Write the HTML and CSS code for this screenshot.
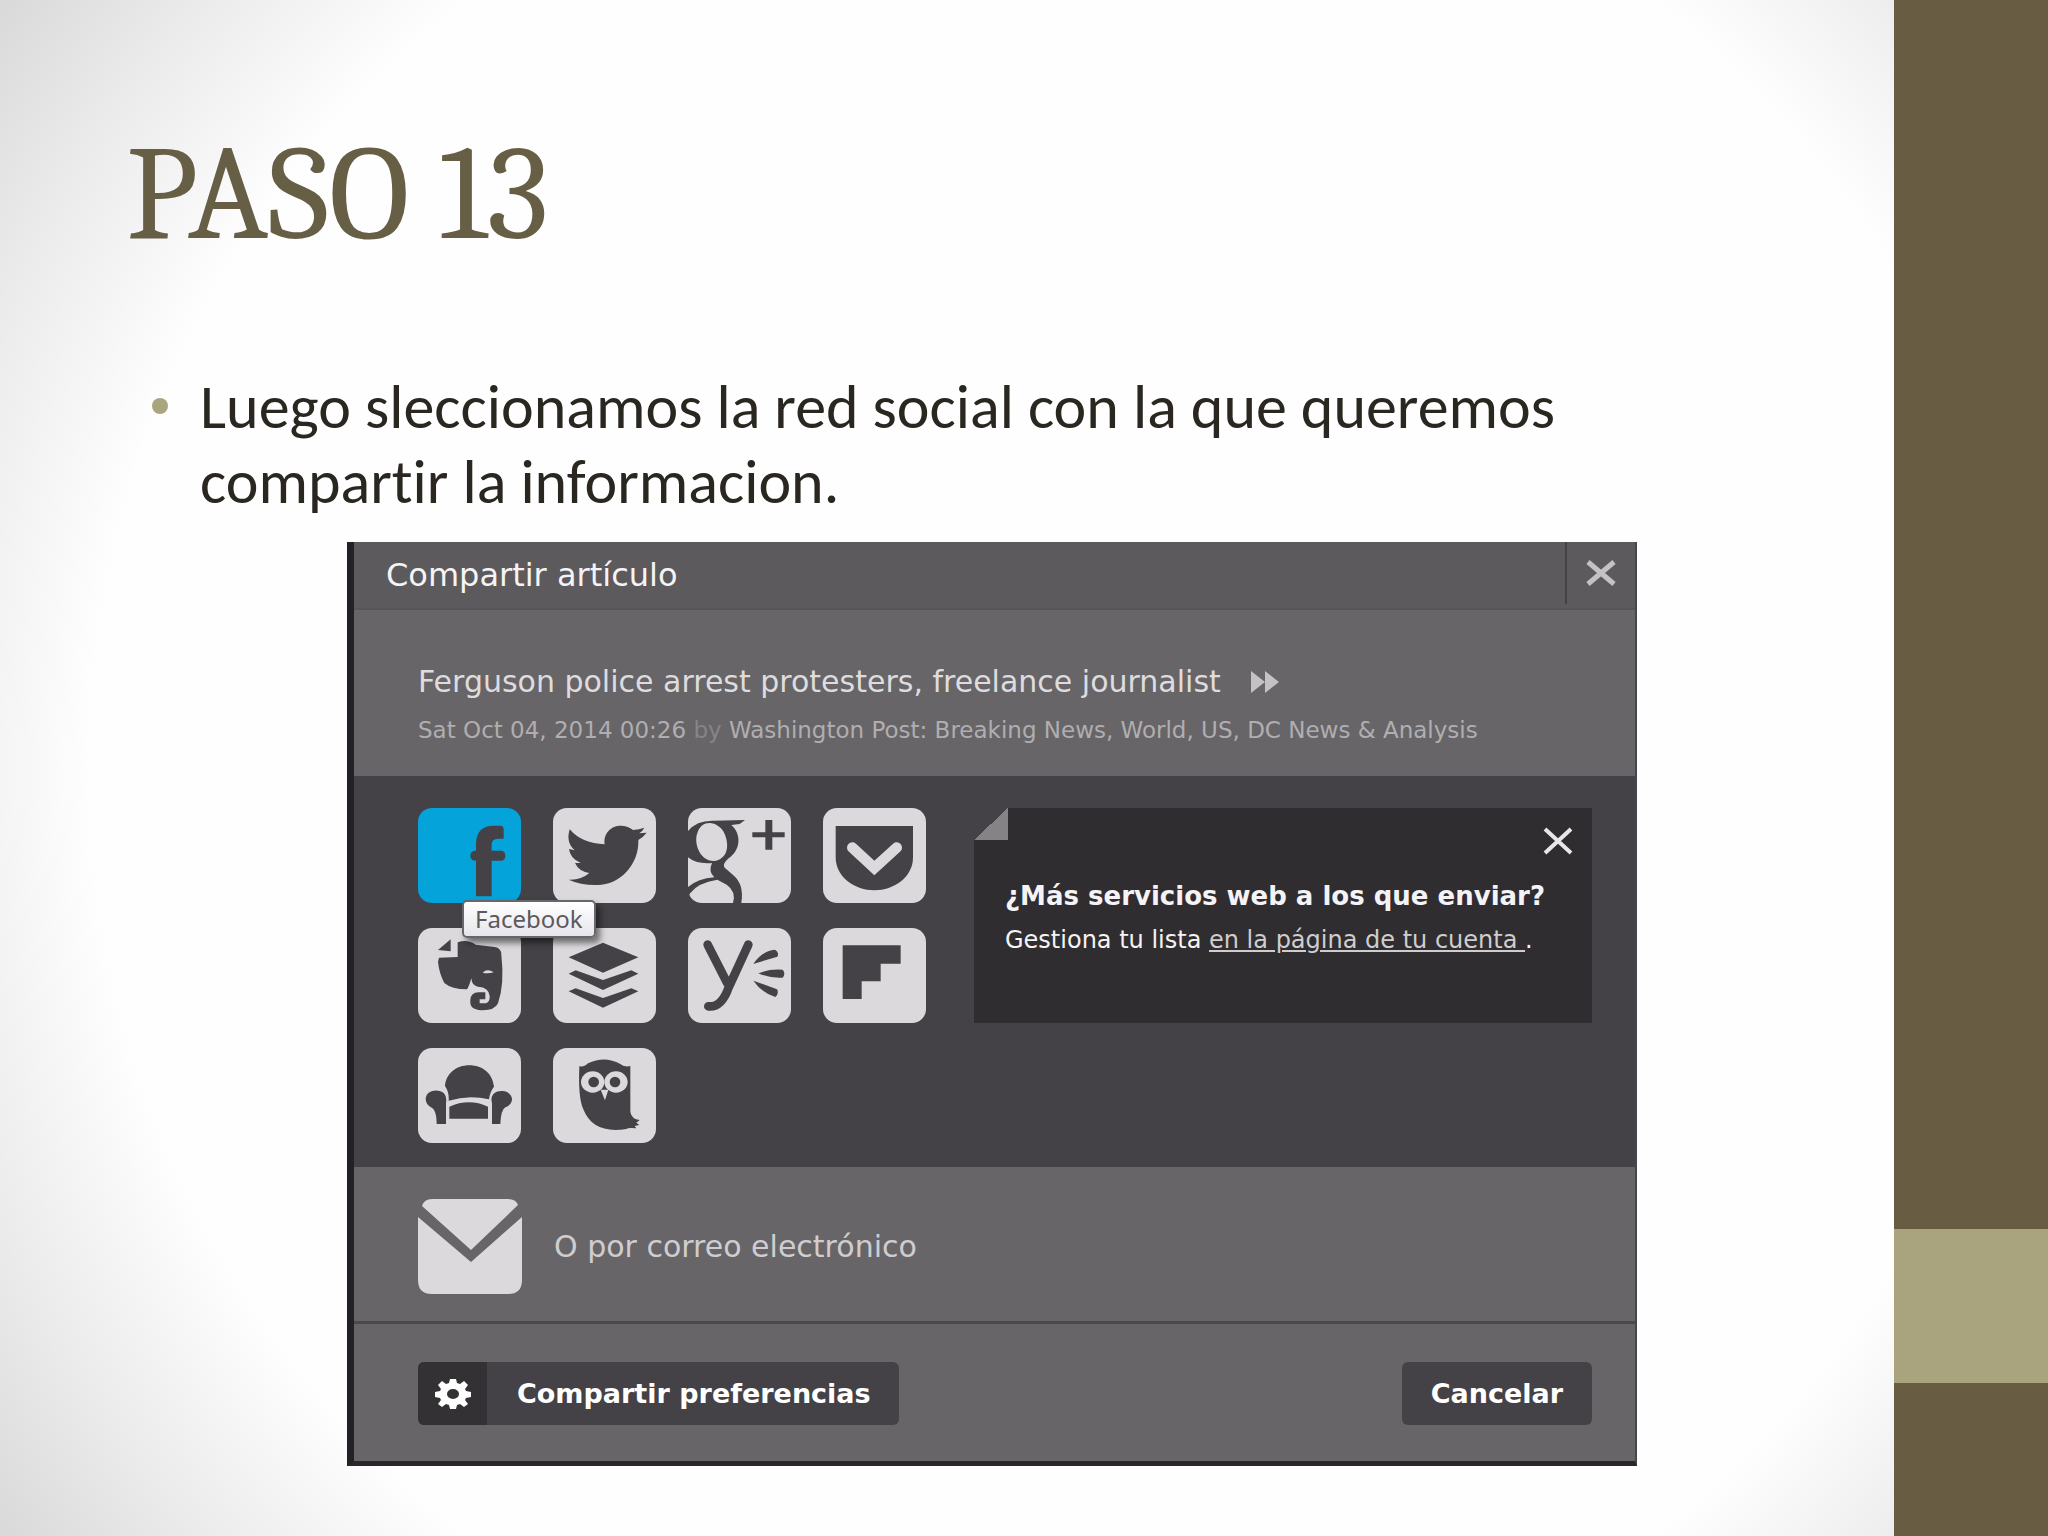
FILE: index.html
```html
<!DOCTYPE html>
<html lang="es">
<head>
<meta charset="UTF-8">
<meta name="viewport" content="width=device-width, initial-scale=1.0">
<title>Paso 13</title>
<link rel="stylesheet" href="styles.css">
</head>
<body>
<main class="slide">
  <h1>PASO 13</h1>
  <ul class="steps">
    <li>Luego sleccionamos la red social con la que queremos compartir la informacion.</li>
  </ul>

  <section class="dialog" aria-label="Compartir artículo">
    <header class="dialog-head">
      <h2>Compartir artículo</h2>
      <button class="close" aria-label="Cerrar">
        <svg width="32" height="28" viewBox="0 0 32 28"><path d="M3 3L29 25M29 3L3 25"/></svg>
      </button>
    </header>

    <div class="article">
      <p class="article-title">Ferguson police arrest protesters, freelance journalist
        <svg width="28" height="22" viewBox="0 0 28 22"><path d="M0 0L14 11L0 22zM14 0L28 11L14 22z"/></svg>
      </p>
      <p class="article-meta">Sat Oct 04, 2014 00:26 <span>by</span> Washington Post: Breaking News, World, US, DC News &amp; Analysis</p>
    </div>

    <div class="services">
      <div class="icons">
        <button class="icon active" aria-label="Facebook">
          <svg viewBox="0 0 309 285"><path d="M174 265V158Q157 158 157 143T174 128V106Q176 54 225 53H248Q257 54 257 64V92H240Q221 93 221 108V128H250Q262 129 262 143T250 158H221V265z"/></svg>
          <span class="tooltip">Facebook</span>
        </button>
        <button class="icon" aria-label="Twitter">
          <svg viewBox="0 0 309 285"><path d="M50 64Q87 107 155 109C150 75 176 52 205 53C222 54 232 60 240 66Q259 65 274 59Q269 69 259 76L281 74Q270 88 256 96C259 170 200 231 134 231Q83 232 47 215Q83 217 109 195Q77 190 66 165H83Q51 151 48 123L65 127Q38 104 50 64z"/></svg>
        </button>
        <button class="icon" aria-label="Google+">
          <svg viewBox="0 0 309 285">
            <path fill-rule="evenodd" d="M0 69Q26 37 75 38L171 36L155 48L130 51C160 78 158 122 128 146Q98 169 112 181L136 202Q169 230 160 285H135Q145 250 116 230L88 215Q30 224 7 255Q2 263 0 265V237Q30 212 79 208Q60 191 72 165Q25 169 0 148zM28 75C16 108 38 160 78 159C115 154 126 119 111 80C96 42 43 28 28 75z"/>
            <path d="M193 73H232V36H253V73H290V88H253V125H232V88H193z"/>
          </svg>
        </button>
        <button class="icon" aria-label="Pocket">
          <svg viewBox="0 0 309 285">
            <path d="M38 54H270V148C270 208 213 247 154 247S38 208 38 148z"/>
            <path class="light-line" d="M88 119L154 180L221 119"/>
          </svg>
        </button>
        <button class="icon" aria-label="Evernote">
          <svg viewBox="0 0 309 285">
            <path fill-rule="evenodd" d="M60 66L98 34V70zM63 89L119 87V43Q149 33 173 50L230 57Q250 60 250 80Q260 168 240 226Q230 248 190 247Q153 245 157 217Q157 194 182 193H202V214H185V226H204Q216 222 215 204Q213 178 180 176Q162 174 160 151Q153 176 147 184Q101 184 79 165Q64 138 60 102zM194 134Q208 120 227 133Q210 138 194 134z"/>
          </svg>
        </button>
        <button class="icon" aria-label="Buffer">
          <svg viewBox="0 0 309 285"><path d="M47 88L150 44L256 88L150 134zM47 137L68 127L150 156L235 127L256 137L150 186zM47 190L68 181L150 210L235 181L256 190L150 239z"/></svg>
        </button>
        <button class="icon" aria-label="Yammer">
          <svg viewBox="0 0 309 285">
            <path class="dark-line" d="M59 50L118 166M181 50L122 178Q101 239 61 235"/>
            <path d="M196 108Q223 68 261 65Q275 73 268 86zM211 136Q245 122 284 125Q294 137 284 149Q245 151 211 136zM196 158L267 184Q274 196 262 207Q222 195 196 158z"/>
          </svg>
        </button>
        <button class="icon" aria-label="Flipboard">
          <svg viewBox="0 0 309 285"><path d="M59 52H233V107H173V160H116V213H59z"/></svg>
        </button>
        <button class="icon" aria-label="Readability">
          <svg viewBox="0 0 309 285"><path d="M81 114C84 77 114 52 154 52S224 77 228 116Q216 130 213 154Q152 139 92 158Q94 133 81 114zM94 176Q153 150 210 176V212H94zM56 228C56 205 53 188 42 179C14 168 18 130 49 128C76 126 88 141 84 165V228zM222 228V165C214 139 236 124 260 130C290 139 288 169 262 178Q249 185 247 228z"/></svg>
        </button>
        <button class="icon" aria-label="Hootsuite">
          <svg viewBox="0 0 309 285">
            <path d="M79 55Q96 57 105 46Q155 22 202 48Q212 58 232 54V192Q236 214 260 216L250 224L259 231L245 234L250 241Q225 238 220 243Q120 259 91 184Q75 151 79 55z"/>
            <g class="owl-face"><ellipse cx="119" cy="102" rx="35" ry="32"/><ellipse cx="189" cy="102" rx="35" ry="32"/><path d="M143 125H166L156 157z"/></g>
            <circle cx="122" cy="102" r="16"/><circle cx="186" cy="102" r="16"/>
          </svg>
        </button>
      </div>

      <aside class="notice">
        <button class="close" aria-label="Cerrar aviso">
          <svg width="32" height="28" viewBox="0 0 32 28"><path d="M3 2L29 26M29 2L3 26"/></svg>
        </button>
        <h3>¿Más servicios web a los que enviar?</h3>
        <p>Gestiona tu lista <a href="#">en la página de tu cuenta&nbsp;</a>.</p>
      </aside>
    </div>

    <div class="email">
      <button class="email-button">
        <svg width="104" height="95" viewBox="0 0 104 95"><path d="M14 0H90Q98 0 100 6L53 51L4 7Q6 0 14 0zM0 18L53 63L104 18V81Q104 95 90 95H14Q0 95 0 81z"/></svg>
        <span>O por correo electrónico</span>
      </button>
    </div>

    <footer class="actions">
      <button class="button prefs">
        <span class="gear">
          <svg width="36" height="30" viewBox="0 0 36 30">
            <path fill-rule="evenodd" d="M15 0H21L22 4L25 5L29 2L33 6L30 10L31 12L36 13V18L31 19L30 21L33 25L29 28L25 25L22 26L21 30H15L14 26L11 25L7 28L3 25L6 21L5 19L0 18V13L5 12L6 10L3 6L7 2L11 5L14 4zM18 10A6 5 0 0 0 18 20A6 5 0 0 0 18 10z"/>
          </svg>
        </span>
        <span class="label">Compartir preferencias</span>
      </button>
      <button class="button cancel">Cancelar</button>
    </footer>
  </section>
</main>
<div class="side">
  <div class="accent"></div>
</div>
</body>
</html>
```
FILE: styles.css
```css
* {
  box-sizing: border-box;
}
body {
  margin: 0;
  min-height: 100vh;
  display: grid;
  grid-template-columns: 1fr 154px;
  font-family: Tahoma, 'DejaVu Sans', sans-serif;
  background-color: #fefefe;
}
h1, h2, h3, p, ul {
  margin: 0;
}
button {
  padding: 0;
  border: 0;
  background: none;
  font: inherit;
  cursor: pointer;
}
svg {
  display: block;
}

.slide {
  padding: 120px 257px 70px 126px;
  background: radial-gradient(circle farthest-corner at 56% 50%, #fefefe 74%, #ebebeb 88%, #d9d9d9 100%);
}
h1 {
  font-family: Cambria, Caladea, 'Liberation Serif', serif;
  font-size: 134px;
  line-height: 150px;
  font-weight: normal;
  color: #665f45;
}
.steps {
  margin-top: 100px;
  padding: 0;
  list-style: none;
  font-family: Calibri, Carlito, Lato, sans-serif;
  font-size: 62px;
  line-height: 75px;
  font-variant-ligatures: none;
  color: #292720;
}
.steps li {
  display: flex;
  padding-left: 26px;
}
.steps li::before {
  content: '';
  flex: none;
  width: 16px;
  height: 16px;
  margin: 28px 32px 0 0;
  border-radius: 50%;
  background-color: #a9a57c;
}

.dialog {
  margin: 22px 0 0 221px;
  border-left: 7px solid #222126;
  border-right: 2px solid #48464a;
  border-bottom: 5px solid #29272b;
  background-color: #676568;
  color: #dedcde;
  font-size: 30px;
  line-height: 40px;
}
.dialog-head {
  display: flex;
  justify-content: space-between;
  height: 68px;
  padding-left: 32px;
  background-color: #5c5a5d;
  border-bottom: 2px solid #575558;
}
.dialog-head h2 {
  font-size: 32px;
  line-height: 66px;
  font-weight: normal;
  color: #f5f3f5;
}
.close {
  display: grid;
  place-items: center;
  stroke: #c4c2c4;
  stroke-width: 5;
}
.dialog-head .close {
  width: 70px;
  height: 62px;
  border-left: 2px solid #444246;
}

.article {
  height: 166px;
  padding: 52px 64px 0;
}
.article-title {
  display: flex;
  align-items: center;
  gap: 30px;
}
.article-title svg {
  fill: #c4c2c4;
}
.article-meta {
  margin-top: 8px;
  font-size: 23px;
  color: #b0aeb0;
}
.article-meta span {
  color: #868487;
}

.services {
  display: flex;
  justify-content: space-between;
  align-items: flex-start;
  padding: 32px 43px 24px 64px;
  background-color: #444246;
}
.icons {
  display: grid;
  grid-template-columns: repeat(4, 103px);
  gap: 25px 32px;
}
.icon {
  position: relative;
  height: 95px;
  border-radius: 14px;
  background-color: #dbd9dc;
  fill: #444246;
}
.icon svg {
  width: 100%;
  height: 100%;
}
.icon.active {
  background-color: #04a3d9;
}
.light-line {
  fill: none;
  stroke: #dbd9dc;
  stroke-width: 32;
  stroke-linecap: round;
}
.dark-line {
  fill: none;
  stroke: #444246;
  stroke-width: 26;
  stroke-linecap: round;
}
.owl-face {
  fill: #dbd9dc;
}
.tooltip {
  position: absolute;
  z-index: 1;
  left: 44px;
  top: 92px;
  padding: 0 11px;
  border: 2px solid #68666a;
  border-radius: 5px;
  background: linear-gradient(#fff, #e6e5eb);
  box-shadow: 4px 5px 6px rgba(0, 0, 0, 0.5);
  font-family: 'Noto Sans', sans-serif;
  font-size: 24px;
  line-height: 34px;
  color: #5b595e;
}

.notice {
  position: relative;
  width: 618px;
  height: 215px;
  padding: 66px 31px 0;
  background-color: #2f2d30;
  color: #f5f3f5;
  font-size: 24px;
}
/* folded corner */
.notice::before {
  content: '';
  position: absolute;
  left: 0;
  top: 0;
  width: 34px;
  height: 32px;
  background: linear-gradient(to bottom right, #444246 50%, #858386 50%);
}
.notice .close {
  position: absolute;
  right: 18px;
  top: 19px;
  stroke: #e8e6e8;
  stroke-width: 4;
}
.notice h3 {
  font-size: 26px;
  line-height: 44px;
  white-space: nowrap;
}
.notice p {
  line-height: 44px;
}
.notice a {
  color: #cfcdcf;
}

.email {
  padding: 32px 64px 27px;
  border-bottom: 3px solid #4b494c;
}
.email-button {
  display: flex;
  align-items: center;
  gap: 32px;
  color: #cfcdcf;
}
.email-button svg {
  fill: #dbd9dc;
}

.actions {
  display: flex;
  justify-content: space-between;
  padding: 38px 43px 36px 64px;
}
.button {
  height: 63px;
  border-radius: 6px;
  background-color: #444246;
  color: #fff;
  font-size: 27px;
  font-weight: bold;
}
.prefs {
  display: flex;
  align-items: center;
  overflow: hidden;
}
.gear {
  display: grid;
  place-items: center;
  width: 69px;
  height: 63px;
  background-color: #333134;
  fill: #fff;
}
.label {
  padding: 0 28px 0 30px;
}
.cancel {
  padding: 0 29px;
}

.side {
  padding-top: 1229px;
  background-color: #685d43;
}
.accent {
  height: 154px;
  background-color: #aaa47e;
}
```
